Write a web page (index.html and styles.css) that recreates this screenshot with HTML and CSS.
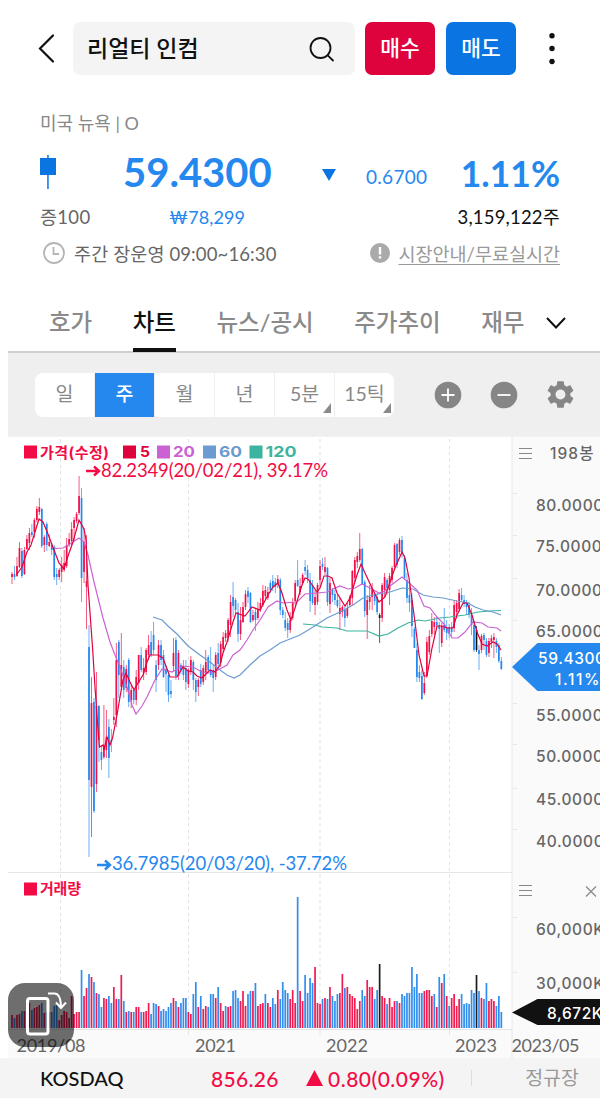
FILE: index.html
```html
<!DOCTYPE html>
<html lang="ko">
    <head>
        <meta charset="UTF-8">
        <meta name="viewport" content="width=device-width, initial-scale=1.0">
        <title>리얼티 인컴</title>
        <link rel="stylesheet" href="styles.css">
    </head>
    <body>
        <div class="app">
            <header class="top-bar">
                <svg class="back-icon" width="20" height="34" viewBox="0 0 20 34"><path d="M17 3.500 4 16.500 17 29.500"/></svg>
                <div class="search-box">
                    <span>리얼티 인컴</span>
                    <svg width="28" height="28" viewBox="0 0 28 28"><circle cx="12.5" cy="13" r="10"/><path d="M19.700 20.300 25 25.500"/></svg>
                </div>
                <button class="order buy">매수</button>
                <button class="order sell">매도</button>
                <svg class="more-icon" width="6" height="32" viewBox="0 0 6 32"><circle cx="3" cy="2.700" r="2.700"/><circle cx="3" cy="15.500" r="2.700"/><circle cx="3" cy="28.500" r="2.700"/></svg>
            </header>

            <section class="quote">
                <div class="market">미국 뉴욕 | O</div>
                <div class="price-row">
                    <svg class="candle-icon" width="16" height="34" viewBox="0 0 16 34"><path d="M7.200 0h1.500v34H7.200zM0 3h16v17H0z"/></svg>
                    <strong class="price">59.4300</strong>
                    <svg class="down-icon" width="14" height="12" viewBox="0 0 14 12"><path d="M0 0h14L7 12z"/></svg>
                    <span class="change">0.6700</span>
                    <strong class="rate">1.11%</strong>
                </div>
                <div class="sub-row">
                    <span class="margin-rate">증100</span>
                    <span class="won">₩78,299</span>
                    <span class="volume">3,159,122주</span>
                </div>
                <div class="info-row">
                    <svg width="22" height="22" viewBox="0 0 22 22"><circle class="clock" cx="11" cy="11" r="10"/><path class="clock" d="M10.500 5v7H16"/></svg>
                    <span class="hours">주간 장운영 09:00~16:30</span>
                    <svg class="notice-icon" width="20" height="20" viewBox="0 0 20 20"><circle cx="10" cy="10" r="10"/><path d="M8.800 4h2.400v7.500H8.800zM8.800 13.200h2.400v2.400H8.800z"/></svg>
                    <a class="guide" href="#">시장안내/무료실시간</a>
                </div>
            </section>

            <nav class="tabs">
                <a class="tab">호가</a>
                <a class="tab active">차트</a>
                <a class="tab">뉴스/공시</a>
                <a class="tab">주가추이</a>
                <a class="tab">재무</a>
                <svg width="20" height="12" viewBox="0 0 20 12"><path d="M1 1l9 9.500 9-9.500"/></svg>
            </nav>

            <div class="toolbar">
                <div class="periods">
                    <span class="period">일</span>
                    <span class="period selected">주</span>
                    <span class="period">월</span>
                    <span class="period">년</span>
                    <span class="period more">5분</span>
                    <span class="period more">15틱</span>
                </div>
                <svg class="tool" width="28" height="28" viewBox="0 0 28 28"><circle cx="14" cy="14" r="13.300"/><path d="M14 7.500v13M7.500 14h13"/></svg>
                <svg class="tool" width="28" height="28" viewBox="0 0 28 28"><circle cx="14" cy="14" r="13.300"/><path d="M7.500 14h13"/></svg>
                <svg class="gear" width="33" height="33" viewBox="0 0 24 24"><path d="M19.140 12.940c.04-.3.06-.61.06-.94 0-.32-.02-.64-.07-.94l2.030-1.580c.18-.14.23-.41.12-.61l-1.920-3.320c-.12-.22-.37-.29-.59-.22l-2.390.96c-.5-.38-1.030-.7-1.620-.94l-.36-2.540c-.04-.24-.24-.41-.48-.41h-3.840c-.24 0-.43.17-.47.41l-.36 2.540c-.59.24-1.130.57-1.620.94l-2.390-.96c-.22-.08-.47 0-.59.22L2.740 8.870c-.12.21-.08.47.12.61l2.030 1.580c-.05.3-.09.63-.09.94s.02.64.07.94l-2.030 1.580c-.18.14-.23.41-.12.61l1.920 3.320c.12.22.37.29.59.22l2.390-.96c.5.38 1.030.7 1.620.94l.36 2.540c.05.24.24.41.48.41h3.840c.24 0 .44-.17.47-.41l.36-2.540c.59-.24 1.130-.56 1.620-.94l2.390.96c.22.08.47 0 .59-.22l1.920-3.320c.12-.22.07-.47-.12-.61l-2.010-1.580zM12 15.600c-1.980 0-3.600-1.620-3.600-3.600s1.620-3.600 3.600-3.600 3.600 1.620 3.600 3.600-1.620 3.600-3.600 3.600z"/></svg>
            </div>

            <div class="chart">
                <svg width="592" height="621" viewBox="8 437 592 621">
                    <rect class="axis-bg" x="512" y="437" width="88" height="621"/>
                    <rect class="axis-bg" x="8" y="1030" width="504" height="28"/>
                    <path class="frame" d="M8 872.500h504M8 1029.500h504M512 437v621"/>
                    <path class="frame" d="M513 493.500h4M513 535.500h4M513 578.500h4M513 620.500h4M513 662.500h4M513 703.500h4M513 744.500h4M513 788.500h4M513 829.500h4M513 917.500h4M513 972.500h4M188.500 1030v5M320 1030v5M449.500 1030v5"/>
                    <path class="grid" d="M60.500 439v590M188.500 439v590M449.500 439v590"/>
                    <path class="grid wide" d="M320 439v590"/>

                    <g id="volumes"></g>
                    <g id="candles"></g>

                    <polyline class="ma ma120" points="303,624 315,625 322,627 337,628 347,631 367,631 379,636 388,634 398,628 408,623 418,620 425,621 440,618 450,617 465,615 478,612 490,611 501,610.500"/>
                    <polyline class="ma ma60" points="153,617 162,620 168,626 177,634 188,646 200,655 210,662 220,670 227,675 234,678 240,675 250,665 260,656 270,650 280,643 290,639 300,635 313,627 327,618 340,612 353,605 363,598 373,595 390,592 402,588 413,589 423,595 433,597 443,598 457,601 468,603 475,607 483,610 493,612 501,615"/>
                    <polyline class="ma ma20" points="52,547 56,548.500 63,548 70,544 79,538 84,542 88,555 94,582 103,618 110,642 115,655 120,667 127,687 132,705 136,714 142,706 147,697 155,680 162,669 172,672 182,666 193,667 202,672 210,673 218,670 227,665 233,655 240,650 247,640 253,630 260,620 268,607 277,601 283,603 297,602 305,594 317,593 327,592 340,586 348,589 355,588 362,584 370,588 379,593 385,591 390,586 402,577 408,582 417,590 424,606 430,608 437,617 445,625 452,638 458,638 465,632 473,622 482,623 488,627 497,628 501,631"/>
                    <polyline class="ma ma5" points="17,574 22,567 27,552 31,545 35,532 39,519 43,522 48,534 54,550 59,563 64,569 68,556 73,542 79,520 84,529 86,540 88,585 92.700,650 95,687 97.500,723 99.500,747 103,745 104,750 107,737 110,745 112.500,738 117,715 120,697 123,680 126,673 130,682 134,690 138,683 143,675 147,662 150,655 158,655 163,658 170,677 177,677 183,667 188,671 193,672 197,676 202,678 205,675 210,670 215,672 220,665 223,653 227,642 233,622 236,613 245,616 252,607 260,610 268,595 273,587 278,583 282,593 287,610 291,620 295,608 302,585 305,578 308,579 317,592 320,588 324,576 328,576 332,578 337,593 345,606 350,598 357,575 361,564 365,573 372,588 379,602 385,597 390,582 395,568 402,552 405,558 409,578 415,622 419,655 424,676 427,676 432,648 437,626 442,626 447,628 453,628 457,615 463,603 467,603 472,615 477,632 482,644 487,646 493,642 497,644 501,650"/>

                    <g class="legend">
                        <path class="up-fill" d="M24 445.500h13v13H24z"/>
                        <text class="up-fill" x="40" y="457.500" textLength="69">가격(수정)</text>
                        <path class="ma5-fill" d="M123 445.500h13v13h-13z"/>
                        <text class="ma5-fill" x="140" y="457" textLength="10" lengthAdjust="spacingAndGlyphs">5</text>
                        <path class="ma20-fill" d="M157 445.500h13v13h-13z"/>
                        <text class="ma20-fill" x="173" y="457" textLength="22" lengthAdjust="spacingAndGlyphs">20</text>
                        <path class="ma60-fill" d="M203 445.500h13v13h-13z"/>
                        <text class="ma60-fill" x="219" y="457" textLength="23" lengthAdjust="spacingAndGlyphs">60</text>
                        <path class="ma120-fill" d="M249.500 445.500h13v13h-13z"/>
                        <text class="ma120-fill" x="265.500" y="457" textLength="31" lengthAdjust="spacingAndGlyphs">120</text>
                        <path class="up-fill" d="M24 882.500h13v13H24z"/>
                        <text class="up-fill" x="40" y="893.500" textLength="41">거래량</text>
                    </g>

                    <path class="arrow up-line" d="M86 471h12.500M94 466.500l5 4.500-5 4.500"/>
                    <text class="extreme up-fill" x="101" y="477" textLength="227">82.2349(20/02/21), 39.17%</text>
                    <path class="arrow down-line" d="M97 865h12.500M105 860.500l5 4.500-5 4.500"/>
                    <text class="extreme down-fill" x="112" y="869.500" textLength="235">36.7985(20/03/20), -37.72%</text>

                    <path class="menu" d="M519 448.500h13M519 453.500h13M519 458.500h13M519 885.500h13M519 890.500h13M519 895.500h13M586 886.500l10 10M596 886.500l-10 10"/>
                    <g class="axis">
                        <text x="550" y="459" textLength="44">198봉</text>
                        <text x="536" y="510.500">80.0000</text>
                        <text x="536" y="552">75.0000</text>
                        <text x="536" y="595.500">70.0000</text>
                        <text x="536" y="637">65.0000</text>
                        <text x="536" y="720.500">55.0000</text>
                        <text x="536" y="762">50.0000</text>
                        <text x="536" y="805">45.0000</text>
                        <text x="536" y="846.500">40.0000</text>
                        <text x="536" y="935">60,000K</text>
                        <text x="536" y="989">30,000K</text>
                        <path class="down-fill" d="M512 667l25.500-24H600v48h-62.500z"/>
                        <text class="tag-text" x="538" y="663.500">59.4300</text>
                        <text class="tag-text" x="555" y="684.500" textLength="45">1.11%</text>
                        <path class="black-fill" d="M512 1012.500l25.500-13.500H600v26h-62.500z"/>
                        <text class="tag-text" x="547" y="1018.500">8,672K</text>
                    </g>
                    <g class="dates">
                        <text x="16.500" y="1052" textLength="69">2019/08</text>
                        <text x="195" y="1052" textLength="41">2021</text>
                        <text x="326" y="1052" textLength="42">2022</text>
                        <text x="455" y="1052" textLength="42">2023</text>
                        <text x="511.500" y="1052" textLength="68">2023/05</text>
                    </g>
                </svg>
                <button class="rotate">
                    <svg width="66" height="64" viewBox="8 983 66 64"><rect x="27.500" y="998.500" width="20.500" height="35.500" rx="2.500"/><path d="M48 993.500h6.500q6 0 6.500 13M56 1002.500l5 5.500 5-5.500"/></svg>
                </button>
            </div>

            <footer class="index-bar">
                <span class="index-name">KOSDAQ</span>
                <span class="index-value">856.26</span>
                <svg width="17" height="16" viewBox="0 0 17 16"><path d="M8.500 0 17 16H0z"/></svg>
                <span class="index-change">0.80(0.09%)</span>
                <span class="session">정규장</span>
            </footer>
        </div>
        <script src="chart.js"></script>
    </body>
</html>
```
FILE: styles.css
```css
* {
    box-sizing: border-box;
    margin: 0;
    padding: 0;
}
body {
    font-family: Lato, "Noto Sans CJK KR", sans-serif;
    background-color: #fff;
    color: #111;
}
button {
    border: 0;
    font-family: inherit;
}
svg {
    display: block;
    flex: none;
}
.app {
    width: 600px;
    height: 1098px;
    overflow: hidden;
}
.top-bar {
    display: flex;
    align-items: center;
    height: 97px;
    padding: 0 45px 0 36px;
}
.back-icon {
    fill: none;
    stroke: #111;
    stroke-width: 2.2;
    stroke-linecap: round;
}
.search-box {
    display: flex;
    align-items: center;
    justify-content: space-between;
    width: 282px;
    height: 53px;
    margin-left: 17px;
    padding: 0 19px 0 14px;
    border-radius: 7px;
    background-color: #f4f4f4;
    font-size: 23px;
    font-weight: 500;
}
.search-box span {
    padding-bottom: 4px;
}
.search-box svg {
    fill: none;
    stroke: #111;
    stroke-width: 1.8;
    stroke-linecap: round;
}
.order {
    width: 70px;
    height: 53px;
    margin-left: 11px;
    padding-bottom: 4px;
    border-radius: 7px;
    color: #fff;
    font-size: 21.5px;
    font-weight: 500;
}
.buy {
    margin-left: 10px;
    background-color: #df033d;
}
.sell {
    background-color: #0a74e2;
}
.more-icon {
    margin-left: auto;
    fill: #111;
}
.quote {
    height: 198px;
    padding: 10px 40px 0;
}
.market {
    height: 32px;
    color: #888;
    font-size: 18px;
    line-height: 32px;
}
.price-row {
    display: flex;
    align-items: center;
    height: 66px;
    color: #2588ee;
}
.candle-icon, .down-icon {
    fill: #0a74e2;
}
.price {
    width: 148px;
    margin-left: 67px;
    font-size: 40px;
}
.down-icon {
    margin: 6px 0 0 51px;
}
.change {
    margin: 9px 0 0 30px;
    font-size: 19px;
    letter-spacing: 0.3px;
}
.rate {
    margin: 3px 0 0 auto;
    font-size: 35.5px;
}
.sub-row {
    display: flex;
    height: 24px;
    font-size: 18.5px;
    line-height: 24px;
}
.margin-rate {
    width: 129px;
    color: #666;
    letter-spacing: 0.3px;
}
.won {
    color: #2588ee;
    font-size: 18px;
    letter-spacing: 0.1px;
}
.volume {
    margin-left: auto;
    letter-spacing: 0.2px;
}
.info-row {
    display: flex;
    align-items: center;
    height: 48px;
    padding-left: 3px;
    font-size: 18.5px;
}
.clock {
    fill: none;
    stroke: #b5b5b5;
    stroke-width: 1.8;
}
.hours {
    margin-left: 9px;
    color: #666;
    letter-spacing: 0.12px;
}
.notice-icon {
    margin: 0 8px 0 auto;
    fill: #aaa;
}
.notice-icon path {
    fill: #fff;
}
.guide {
    color: #999;
    text-underline-offset: 3px;
}
.tabs {
    display: flex;
    align-items: center;
    height: 58px;
    margin-left: 8px;
    padding-left: 41px;
    border-bottom: 2px solid #cfcfcf;
}
.tab {
    height: 58px;
    margin-right: 40.5px;
    color: #8a8a8a;
    font-size: 23.5px;
    font-weight: 500;
    line-height: 56px;
    white-space: nowrap;
}
.tab.active {
    color: #111;
    border-bottom: 4px solid #111;
}
.tabs svg {
    margin-left: -19px;
    fill: none;
    stroke: #111;
    stroke-width: 2;
}
.toolbar {
    display: flex;
    align-items: center;
    height: 84px;
    margin-left: 8px;
    padding-left: 27px;
    background-color: #efefef;
    border-bottom: 1px solid #f2f2f2;
}
.periods {
    display: flex;
    width: 359px;
    height: 44px;
    margin-right: 40px;
    border-radius: 8px;
    background-color: #fff;
}
.period {
    position: relative;
    flex: 1;
    border-left: 1px solid #eee;
    color: #888;
    font-size: 19.5px;
    line-height: 42px;
    text-align: center;
}
.period:first-child {
    border-left: 0;
}
.period.selected {
    background-color: #2588ee;
    color: #fff;
    font-weight: 500;
}
.period.more::after {
    content: "";
    position: absolute;
    right: 3px;
    bottom: 4px;
    border-left: 8px solid transparent;
    border-bottom: 10px solid #8a8a8a;
}
.tool {
    margin-right: 28px;
    fill: #868686;
    stroke: #fff;
    stroke-width: 1.8;
}
.tool circle {
    stroke: none;
}
.gear {
    margin-left: -2px;
    fill: #868686;
}
.chart {
    position: relative;
    height: 621px;
    margin-left: 8px;
}
.axis-bg {
    fill: #fafafa;
}
.frame {
    stroke: #e6e6e6;
}
.grid {
    stroke: #e2e2e2;
    stroke-dasharray: 3.2;
}
.grid.wide {
    stroke: #efefef;
    stroke-width: 2;
}
.ma {
    fill: none;
    stroke-width: 1.2;
}
.ma5 {
    stroke: #df033d;
}
.ma20 {
    stroke: #cb62d4;
}
.ma60 {
    stroke: #6b9bd0;
}
.ma120 {
    stroke: #3cb4a0;
}
.ma5-fill {
    fill: #df033d;
}
.ma20-fill {
    fill: #cb62d4;
}
.ma60-fill {
    fill: #6b9bd0;
}
.ma120-fill {
    fill: #3cb4a0;
}
.up-fill {
    fill: #f30b45;
}
.down-fill {
    fill: #2588ee;
}
.black-fill {
    fill: #111;
}
.legend {
    font-family: Inter, "Noto Sans CJK KR", sans-serif;
    font-size: 15px;
    font-weight: 700;
}
.extreme {
    font-size: 18.5px;
}
.arrow {
    fill: none;
    stroke-width: 2.4;
}
.up-line {
    stroke: #f30b45;
}
.down-line {
    stroke: #2588ee;
}
.menu {
    fill: none;
    stroke: #888;
    stroke-width: 1.2;
}
.axis {
    font-family: Inter, "Noto Sans CJK KR", sans-serif;
    font-size: 15.5px;
    font-weight: 500;
    letter-spacing: 0.6px;
}
.axis text {
    fill: #666;
}
.axis .tag-text {
    fill: #fff;
}
.dates {
    fill: #666;
    font-size: 18px;
}
.rotate {
    position: absolute;
    left: 0;
    top: 546px;
    border-radius: 17px;
    background-color: rgba(0, 0, 0, 0.57);
}
.rotate svg {
    fill: none;
    stroke: #fff;
    stroke-width: 3;
}
.rotate path {
    stroke-width: 2;
}
.index-bar {
    display: flex;
    align-items: center;
    height: 40px;
    padding: 0 21px 0 40px;
    background-color: #f4f4f4;
    font-size: 20px;
}
.index-name {
    width: 171px;
    font-weight: 500;
}
.index-value {
    width: 95px;
    color: #f30b45;
    font-size: 21px;
    font-weight: 500;
    letter-spacing: 0.3px;
}
.index-bar svg {
    fill: #f30b45;
}
.index-change {
    margin-left: 5px;
    color: #f30b45;
    font-size: 21px;
    font-weight: 500;
    letter-spacing: 0.5px;
}
.session {
    margin-left: auto;
    padding-left: 53px;
    border-left: 1px solid #ddd;
    color: #999;
    font-size: 19.5px;
    line-height: 16px;
}
```
FILE: chart.js
```js
// weekly bars: color, high, low, body top, body bottom (chart y units)
const candles = `r572 584 574 577|b566 580 574 577|r557 577 566 576|r542 568 548 567|b548 578 551 576|r547 575 550 574|r535 550 539 549|r528 550 533 543|b524 537 532 535|r518 538 520 532|r506 522 509 520|r498 515 507 512|b508 548 509 546|r535 552 537 545|b522 551 524 545|r535 547 542 546|b543 555 545 550|b545 580 547 577|b568 585 574 577|r568 580 570 577|r557 582 565 572|r550 572 563 570|r538 568 545 566|r533 547 539 545|r522 545 529 541|r517 541 520 528|r512 523 514 521|r476 515 496 513|b488 602 498 578|r528 583 542 572|r535 629 581 587|b625 857 647 780|r677 837 703 787|b698 813 702 811|r672 792 706 784|b705 762 706 740|b745 770 752 760|r705 759 745 757|r710 758 737 750|b719 778 727 758|b729 752 740 742|r698 725 717 720|r643 727 660 715|b640 698 642 675|r633 690 665 687|b660 698 667 690|r665 692 669 688|b658 707 660 702|r685 708 690 700|b687 704 690 700|r670 705 677 700|r655 690 655 683|b647 672 655 670|r658 680 668 673|r648 675 650 672|r635 660 645 655|b631 657 642 655|b622 655 635 650|b660 692 665 680|r640 670 645 665|b640 665 645 660|b650 678 655 677|b665 692 669 674|b672 702 675 695|b680 698 691 694|r638 672 653 666|b637 680 640 676|r650 680 653 676|b663 674 665 670|b660 680 667 675|b660 690 668 682|r668 688 670 684|r656 675 660 672|b660 690 662 680|b678 702 680 692|r678 696 680 687|b664 687 670 684|r665 685 668 682|r650 680 662 672|b655 672 657 670|b647 677 670 675|b665 692 670 678|r652 680 655 677|b643 668 653 664|r641 667 644 663|r632 652 637 649|r630 642 633 638|r618 642 620 638|r595 637 602 625|b582 617 597 606|b598 615 600 610|b603 642 612 634|r607 640 620 634|r602 623 607 622|r590 610 594 607|b587 603 591 597|b592 623 593 622|r610 622 615 620|b608 631 612 620|r602 620 609 618|r598 612 603 610|r585 607 591 605|r586 600 590 596|r587 600 592 598|b580 593 583 590|b575 591 581 587|b578 593 582 587|r575 588 579 584|b578 615 580 610|b607 618 610 615|b612 631 620 628|b618 638 623 630|r612 633 620 630|r598 620 602 618|r580 605 583 601|b560 587 580 586|r578 595 586 592|r573 585 575 583|b560 575 567 571|b565 583 570 578|b573 612 580 601|b580 605 585 603|r590 615 597 605|r583 605 585 602|r560 587 566 580|b558 570 564 567|r557 575 567 572|b567 606 568 602|r578 613 583 604|b588 602 590 595|b590 605 594 600|b595 608 600 606|r598 630 608 614|r605 617 607 612|b607 627 610 618|r603 618 608 616|r595 607 597 605|r570 605 571 598|r557 582 560 578|r552 568 556 562|r533 562 549 560|b548 585 549 584|b580 617 582 611|r595 639 600 615|r585 610 597 602|r583 610 588 597|b592 605 595 601|b593 615 597 612|k613 643 615 618|r583 622 585 618|r573 597 577 590|b578 595 580 588|r573 605 576 590|r566 583 568 580|r543 570 545 567|b543 568 544 565|r538 555 540 552|b536 558 540 553|b555 580 558 578|b573 603 580 598|b585 612 595 603|b593 637 600 626|b627 648 629 648|b643 682 650 677|b665 682 672 678|b670 700 676 699|r672 695 683 693|r637 678 642 676|r630 655 636 652|r613 637 621 634|r617 635 622 627|b616 628 622 625|b622 653 625 629|r623 647 626 643|b608 632 625 630|b620 640 627 633|b624 638 627 634|b622 636 627 632|r600 632 605 628|r600 618 603 612|r589 612 593 609|b588 602 595 600|b595 607 600 604|b600 615 602 607|b602 618 605 615|b608 635 615 625|b621 652 625 650|k626 652 630 650|b645 670 650 654|r634 653 636 650|b633 650 635 640|b638 657 641 655|r638 657 641 653|r635 648 638 642|r633 658 637 640|b638 653 641 647|b643 663 645 661|b657 670 661 669`;

// weekly volume: color and bar height
const volumes = "r13 b10 r13 r14 b17 r17 r15 r25 b18 r20 r21 r23 b25 r15 b16 r16 b16 b22 b23 r8 r13 r17 r16 r10 r32 r14 r16 r16 b58 r32 r40 b54 r51 b46 r35 b34 b21 r30 r29 b32 b25 r41 r29 b29 r53 b27 r16 b17 r16 b16 r21 r21 b16 r16 r17 r25 b14 b25 b24 r22 b17 b19 b17 b21 b25 r30 b27 r21 b25 b30 b30 r16 r14 b34 b46 r21 b32 r19 r22 b21 b34 b34 r30 b41 r25 r17 b22 r21 r22 b37 b38 b30 r27 r37 r22 b34 b37 r37 b45 r22 r24 r25 b34 r25 r21 b30 b24 r38 b29 b46 b38 b35 r29 r38 r25 b131 r37 r27 b53 b35 b50 b45 r61 r25 r24 b29 r30 b29 r41 b32 b27 b34 r35 r54 b40 r41 r34 r32 r30 r19 r27 b38 b32 r48 r41 r41 b29 b38 k64 r32 r30 b24 r30 r21 r27 b27 r25 b34 b32 b35 b35 b61 b41 b54 b35 b35 r37 r38 r38 r32 b34 r21 b51 r45 b54 r32 b22 r30 r34 r22 r29 b34 b24 b25 b24 b38 b35 k53 b37 r30 b29 b45 r27 r29 r27 b22 b32 b16";

const colors = { r: "#f00f47", b: "#2588ee", k: "#111" };
const step = 2.484;

function rect(x, y, w, h, color, opacity) {
    return `<rect x="${(x - w / 2).toFixed(2)}" y="${y}" width="${w}" height="${h}" fill="${color}" opacity="${opacity}"/>`;
}

document.querySelector("#candles").innerHTML = candles.split("|").map((row, i) => {
    const color = colors[row[0]];
    const [high, low, top, bottom] = row.slice(1).split(" ").map(Number);
    const x = 12 + i * step;
    return rect(x, high, 0.9, low - high, color, 0.75) + rect(x, top, 1.7, bottom - top, color, 1);
}).join("");

document.querySelector("#volumes").innerHTML = volumes.split(" ").map((bar, i) => {
    const height = Number(bar.slice(1));
    return rect(12 + i * step, 1028 - height, 1.7, height, colors[bar[0]], 0.95);
}).join("");
```
